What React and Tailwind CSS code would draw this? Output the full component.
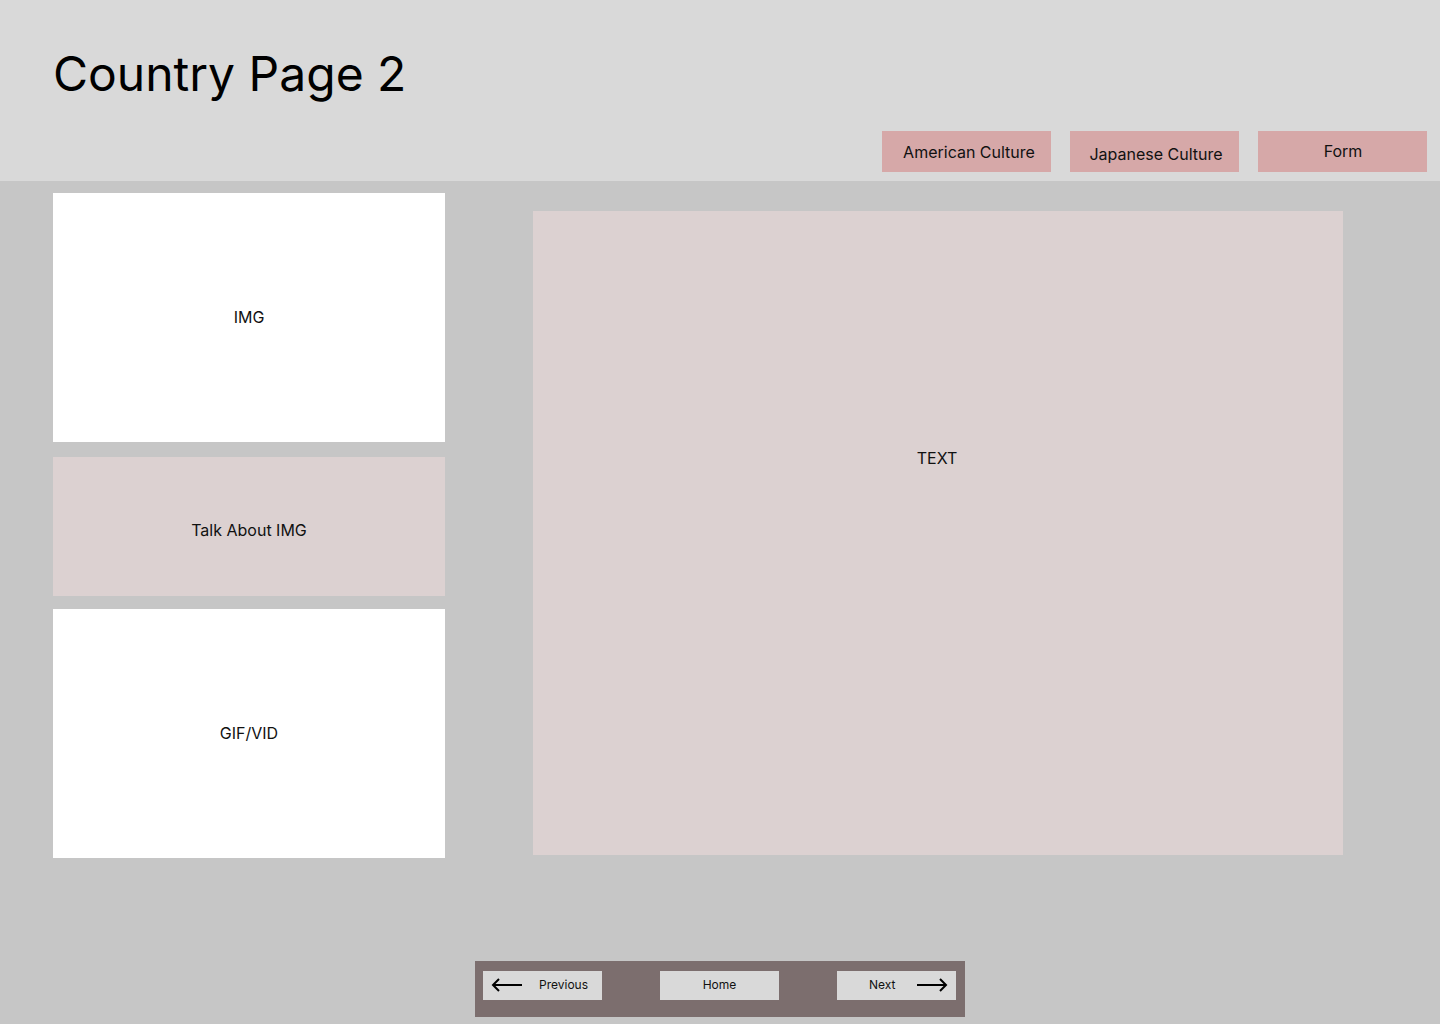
const ArrowLeft = () => (
  <svg width="32" height="14" viewBox="0 0 32 14" fill="none" stroke="black" strokeWidth="2">
    <path d="M31 7H2" />
    <path d="M8 1L2 7l6 6" />
  </svg>
);

const ArrowRight = () => (
  <svg width="32" height="14" viewBox="0 0 32 14" fill="none" stroke="black" strokeWidth="2">
    <path d="M1 7h29" />
    <path d="M24 1l6 6-6 6" />
  </svg>
);

const App = () => {
  const navLinks = [
    { label: 'American Culture', cls: 'pl-[5px]' },
    { label: 'Japanese Culture', cls: 'pl-[3px] pt-[4px]' },
    { label: 'Form', cls: 'pl-[1px] pb-[2px]' },
  ];

  return (
    <div className="min-h-[1024px] w-[1440px] bg-[#c6c6c6] font-['Inter',sans-serif] text-[#111] flex flex-col">
      <header className="bg-[#d9d9d9] h-[181px] flex flex-col">
        <h1 className="pl-[53px] pt-[45px] text-[48px] leading-[58px] font-normal text-black">Country Page 2</h1>
        <nav className="mt-[28px] flex justify-end gap-[19px] pr-[13px]">
          {navLinks.map((l) => (
            <button
              key={l.label}
              className={`w-[169px] h-[41px] bg-[#d6a8a8] text-[16px] flex justify-center items-center ${l.cls}`}
            >
              {l.label}
            </button>
          ))}
        </nav>
      </header>

      <main className="flex pl-[53px] pt-[12px] gap-[88px]">
        <div className="w-[392px] flex flex-col">
          <div className="h-[249px] bg-white flex items-center justify-center pb-[2px] text-[16px]">IMG</div>
          <div className="mt-[15px] h-[139px] bg-[#dcd1d1] flex items-center justify-center pt-[7px] text-[16px]">Talk About IMG</div>
          <div className="mt-[13px] h-[249px] bg-white flex items-center justify-center pb-[2px] text-[16px]">GIF/VID</div>
        </div>
        <div className="mt-[18px] w-[810px] h-[644px] bg-[#dcd1d1] flex justify-center pt-[235px] pr-[2px] text-[16px]">TEXT</div>
      </main>

      <div className="mt-[103px] flex justify-center">
        <div className="w-[490px] h-[56px] bg-[#7c6e6e] flex justify-between pl-[8px] pr-[9px] pt-[10px]">
          <button className="w-[119px] h-[29px] bg-[#d9d9d9] flex items-center pl-[8px] pb-[1px] gap-[16px] text-[12px]">
            <ArrowLeft />
            <span>Previous</span>
          </button>
          <button className="w-[119px] h-[29px] bg-[#d9d9d9] flex items-center justify-center pb-[1px] text-[12px]">Home</button>
          <button className="w-[119px] h-[29px] bg-[#d9d9d9] flex items-center pl-[32px] pb-[1px] gap-[21px] text-[12px]">
            <span>Next</span>
            <ArrowRight />
          </button>
        </div>
      </div>
    </div>
  );
};

export default App;
